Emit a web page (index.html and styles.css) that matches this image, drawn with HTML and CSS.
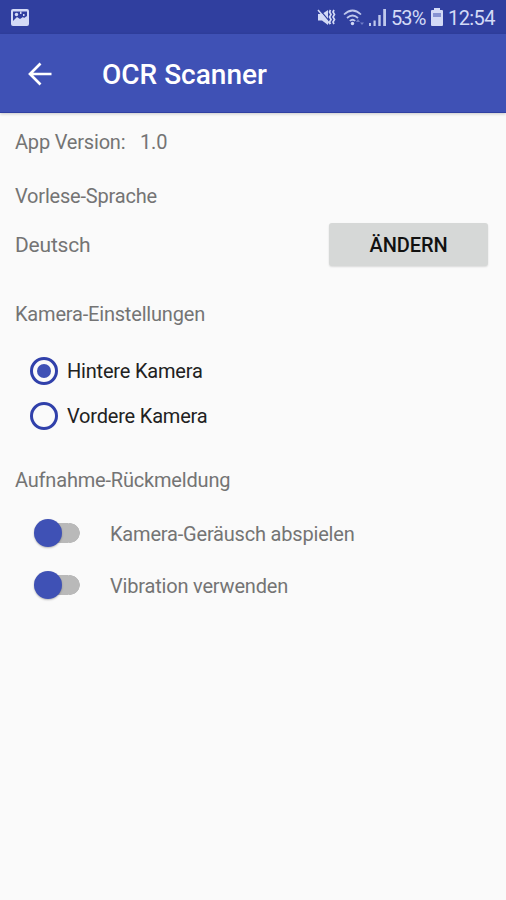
FILE: index.html
```html
<!DOCTYPE html>
<html lang="de">
<head>
<meta charset="utf-8">
<title>OCR Scanner</title>
<link rel="stylesheet" href="styles.css">
</head>
<body>
<div class="status">
  <svg class="picture" width="18" height="17" viewBox="0 0 18 17"><path fill="#d3daf6" fill-rule="evenodd" d="M2 0h14q2 0 2 2v13q0 2-2 2H2q-2 0-2-2V2Q0 0 2 0zM2 2.500V12l4-4 3 2 3-2 1 1 3-2V2.500z"/><circle cx="5.500" cy="5.500" r="1.700" fill="#d3daf6"/><path fill="#d3daf6" d="M9 2.500h1.500V5H9zM12 5h1.500v2H12z"/></svg>
  <div class="indicators">
    <svg class="mute" width="20" height="18" viewBox="0 0 20 18"><path fill="#d3daf6" d="M1 6h4l6-4v15l-6-4.500H1z"/><path d="M2 1l11 13" stroke="#303f9f" stroke-width="1.200"/><path d="M1 2l12 14" stroke="#d3daf6" stroke-width="1.500"/><path fill="none" stroke="#d3daf6" stroke-width="1.700" d="M13.500 2l-1 2 1.500 2.500-1.500 2.500 1.500 2.500-1.500 2.500 1 2M17 2l-1 2 1.500 2.500L16 9l1.500 2.500L16 14l1 2"/></svg>
    <svg class="wifi" width="22" height="17" viewBox="0 0 22 17"><g fill="none" stroke="#bfc8ec" stroke-width="1.700"><path d="M1 5.500q8.500-8 17 0M4 9q5.500-5 11 0M6.800 12q2.700-2.500 5.400 0"/></g><circle cx="9.500" cy="14.500" r="1.700" fill="#d3daf6"/><path fill="#6f7cc6" d="M15 10l2 3h-4zM17 13.500h4l-2 2.500z"/></svg>
    <svg class="signal" width="17" height="17" viewBox="0 0 17 17"><path fill="#bfc8ec" d="M0 14h2v3H0zM4.500 11.500h2.200V17H4.500zM9.300 6h2.400v11H9.300zM14.200 0H17v17h-2.800z"/></svg>
    <span class="percent">53%</span>
    <svg class="battery" width="12" height="18" viewBox="0 0 12 18"><path fill="#d3daf6" d="M3 0h6v2h2q1 0 1 1v14q0 1-1 1H1q-1 0-1-1V3q0-1 1-1h2z"/><path fill="#8793d2" d="M2 5h8v4H2z"/></svg>
    <span class="clock">12:54</span>
  </div>
</div>
<header class="toolbar">
  <svg class="back" width="24" height="24" viewBox="0 0 24 24"><path d="M23.500 12H2.500M12.500 1.500L2 12l10.500 10.500" fill="none" stroke="#fff" stroke-width="2.700"/></svg>
  <h1>OCR Scanner</h1>
</header>
<main>
  <div class="version"><span class="version-key">App Version:</span><span>1.0</span></div>
  <h2 class="language-title"><span>Vorlese-Sprache</span></h2>
  <div class="language"><span class="lang-name">Deutsch</span><button><span>ÄNDERN</span></button></div>
  <h2 class="camera-title"><span>Kamera-Einstellungen</span></h2>
  <div class="option"><i class="radio checked"></i><span class="rear">Hintere Kamera</span></div>
  <div class="option"><i class="radio"></i><span class="front">Vordere Kamera</span></div>
  <h2 class="feedback-title"><span>Aufnahme-Rückmeldung</span></h2>
  <div class="setting"><i class="switch"><b></b></i><span class="sound">Kamera-Geräusch abspielen</span></div>
  <div class="setting"><i class="switch"><b></b></i><span class="vibration">Vibration verwenden</span></div>
</main>
</body>
</html>
```

FILE: styles.css
```css
* { box-sizing: border-box; }
body {
  margin: 0;
  min-height: 900px;
  background: #fafafa;
  color: #747474;
  font: 20px/24px Roboto, "Liberation Sans", sans-serif;
  letter-spacing: -.19px;
  white-space: nowrap;
}
svg { display: block; flex: none; }
.status {
  height: 34px;
  padding: 0 11px;
  display: flex;
  align-items: center;
  justify-content: space-between;
  background: #303f9f;
  color: #d3daf6;
}
.indicators { display: flex; align-items: center; }
.percent, .clock { padding-top: 2px; }
.wifi { margin-left: 6px; }
.signal { margin-left: 4px; }
.percent { margin-left: 5px; width: 34px; letter-spacing: -.9px; }
.battery { margin-left: 6px; }
.clock { margin-left: 5px; width: 47px; letter-spacing: -.6px; }
.toolbar {
  height: 79px;
  padding: 2px 28px 0;
  display: flex;
  align-items: center;
  background: #3f51b5;
  border-bottom: 1px solid #3040a2;
  box-shadow: 0 1px 3px #0003;
  color: #fff;
}
h1 { margin: 1px 0 0 50px; font-size: 28px; font-weight: 500; letter-spacing: 0; }
h2 { margin: 0; font-size: 20px; font-weight: 400; display: flex; align-items: center; }
main { padding: 0 18px 0 15px; }
.version { height: 57px; display: flex; align-items: center; }
.version-key { width: 125px; }
.language-title { height: 53px; padding-bottom: 1px; }
.language { height: 43px; display: flex; align-items: center; justify-content: space-between; }
.lang-name { font-size: 21px; }
button {
  width: 159px;
  height: 43px;
  padding: 0;
  border: 0;
  border-radius: 3px;
  background: #d6d8d7;
  box-shadow: 0 1px 2px #0002;
  color: #111;
  font: 500 20px/24px Roboto, "Liberation Sans", sans-serif;
  letter-spacing: -.1px;
}
.camera-title { height: 24px; margin: 36px 0 22px; }
.option { height: 45px; padding-left: 15px; display: flex; align-items: center; color: #212121; }
.radio {
  width: 28px;
  height: 28px;
  margin-right: 9px;
  border: 3px solid #3040aa;
  border-radius: 50%;
  display: grid;
  place-items: center;
}
.checked::after { content: ""; width: 14px; height: 14px; border-radius: 50%; background: #3f51b5; }
.feedback-title { height: 24px; margin: 30px 0 15px; }
.setting { height: 52px; padding-left: 19px; display: flex; align-items: center; }
.setting span { padding-top: 1px; }
.switch {
  width: 46px;
  height: 28px;
  margin-right: 30px;
  display: flex;
  align-items: center;
  background: linear-gradient(#b9b9b9, #b9b9b9) 14px 50% / 20px 20px no-repeat, radial-gradient(circle at 36px 14px, #b9b9b9 9.500px, transparent 10px);
}
.switch b { width: 28px; height: 28px; border-radius: 50%; background: #3f51b5; box-shadow: 0 1px 2px #0004; }
```
